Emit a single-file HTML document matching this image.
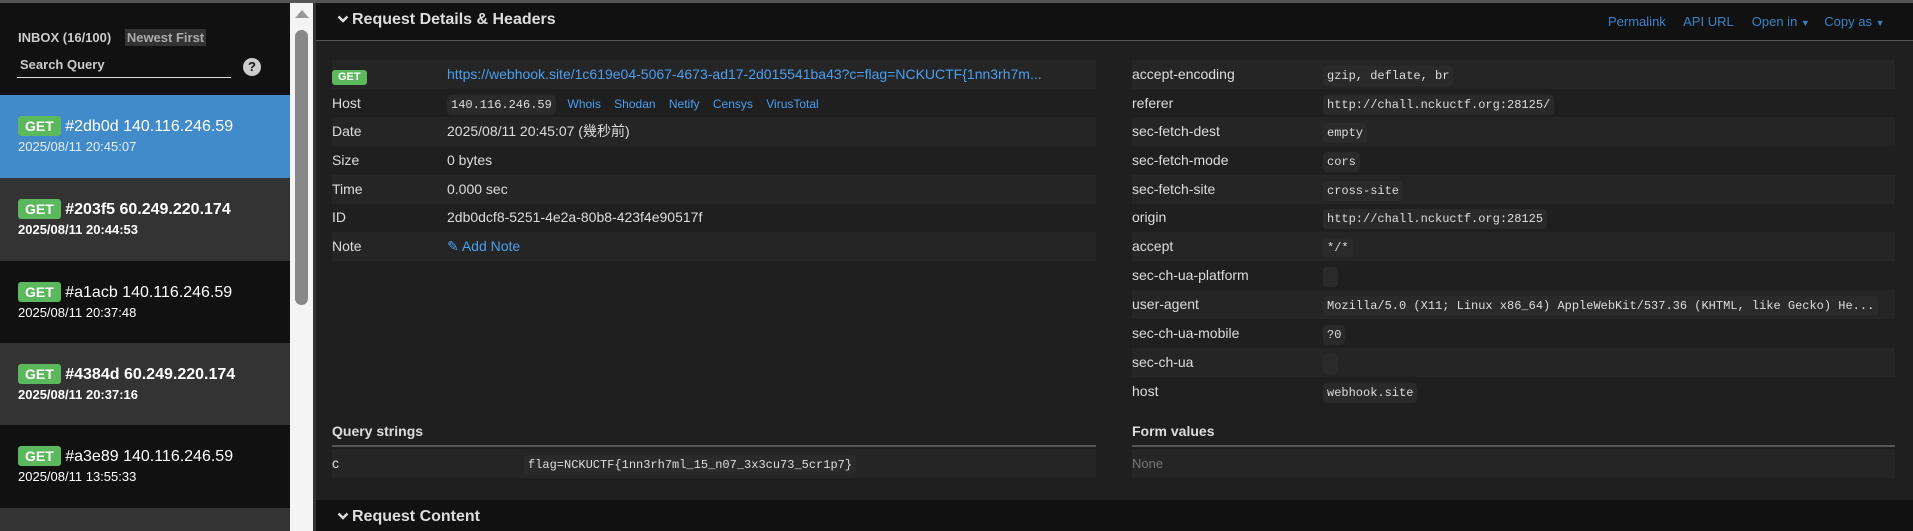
<!DOCTYPE html>
<html><head><meta charset="utf-8"><style>
*{margin:0;padding:0;box-sizing:border-box}
html,body{width:1913px;height:531px;overflow:hidden}
body{background:#1e1e1e;font-family:"Liberation Sans","Noto Sans CJK TC",sans-serif;color:#ddd;position:relative}
.abs{position:absolute}
.top{left:0;top:0;width:1913px;height:3px;background:#555}
.side{left:0;top:3px;width:290px;height:528px;background:#111}
.sb{left:290px;top:3px;width:23px;height:528px;background:#f4f4f4}
.thumb{left:295px;top:30px;width:13px;height:275px;background:#888;border-radius:7px}
.item{position:absolute;left:0;width:290px;height:83px}
.get{display:inline-block;background:#5cb85c;color:#fff;font-weight:bold;font-size:14px;padding:1px 7px;border-radius:3px;line-height:18px}
.it1{position:absolute;left:18px;top:21px;font-size:16px;color:#fff;white-space:nowrap}
.it2{position:absolute;left:18px;top:44px;font-size:13px;color:#fff}
.main{left:313px;top:3px;width:1600px;height:528px;background:#1f1f1f;border-left:3px solid #333}
.hdr{left:316px;top:3px;width:1597px;height:38px;background:#111;border-bottom:1px solid #555}
.row{position:absolute;height:29px;font-size:14px;line-height:29px;white-space:nowrap;overflow:hidden}
.row .l{position:absolute;left:0}
.mono{font-family:"Liberation Mono",monospace;font-size:12px;background:#2a2a2a;border-radius:4px;padding:3px 4px}
a{color:#4a9ff0;text-decoration:none}
.lk{color:#3a82c8;font-size:13px;white-space:nowrap}
</style></head><body>
<div class="abs top"></div>
<div class="abs side">
 <div class="abs" style="left:18px;top:27px;font-size:13px;color:#ccc;font-weight:bold">INBOX (16/100) <span style="background:#333;color:#aaa;padding:1px 2px;margin-left:10px">Newest First</span></div>
 <div class="abs" style="left:17px;top:54px;width:214px;height:21px;border-bottom:1px solid #ddd;font-size:13px;color:#ccc;font-weight:bold;padding-left:3px">Search Query</div>
 <div class="abs" style="left:243px;top:55px;width:18px;height:18px;border-radius:50%;background:#ccc;color:#111;font-size:13px;font-weight:bold;text-align:center;line-height:18px">?</div>
</div>
<div class="item" style="top:95px;background:#428bca"><div class="it1"><span class="get">GET</span> #2db0d 140.116.246.59</div><div class="it2" style="color:#e8eef5">2025/08/11 20:45:07</div></div>
<div class="item" style="top:178px;background:#333"><div class="it1" style="font-weight:bold"><span class="get">GET</span> #203f5 60.249.220.174</div><div class="it2" style="font-weight:bold">2025/08/11 20:44:53</div></div>
<div class="item" style="top:261px;background:#111"><div class="it1"><span class="get">GET</span> #a1acb 140.116.246.59</div><div class="it2">2025/08/11 20:37:48</div></div>
<div class="item" style="top:343px;background:#333"><div class="it1" style="font-weight:bold"><span class="get">GET</span> #4384d 60.249.220.174</div><div class="it2" style="font-weight:bold">2025/08/11 20:37:16</div></div>
<div class="item" style="top:425px;background:#111"><div class="it1"><span class="get">GET</span> #a3e89 140.116.246.59</div><div class="it2">2025/08/11 13:55:33</div></div>
<div class="item" style="top:508px;height:23px;background:#333"></div>
<div class="abs sb"></div>
<div class="abs" style="left:295px;top:10px;width:0;height:0;border-left:7px solid transparent;border-right:7px solid transparent;border-bottom:8px solid #999"></div>
<div class="abs thumb"></div>
<div class="abs main"></div>
<div class="abs hdr"></div>
<div class="abs" style="left:337px;top:11px;font-size:16px;font-weight:bold;color:#ddd"><svg width="12" height="10" viewBox="0 0 12 10" style="margin-right:3px"><path d="M1.5 2.5 L6 7 L10.5 2.5" stroke="#ddd" stroke-width="2.5" fill="none"/></svg>Request Details &amp; Headers</div>
<div class="abs lk" style="left:1608px;top:14px">Permalink&nbsp;&nbsp;&nbsp;&nbsp; API URL&nbsp;&nbsp;&nbsp;&nbsp; Open in <span style="font-size:9px">▼</span>&nbsp;&nbsp;&nbsp; Copy as <span style="font-size:9px">▼</span></div>

<div class="row" style="left:332px;top:60px;width:764px;background:#252525"><span class="l" style="top:1px"><span class="get" style="font-size:11px;line-height:15px;padding:0 6px">GET</span></span><a style="position:absolute;left:115px">https://webhook.site/1c619e04-5067-4673-ad17-2d015541ba43?c=flag=NCKUCTF{1nn3rh7m...</a></div>
<div class="row" style="left:332px;top:89px;width:764px"><span class="l">Host</span><span style="position:absolute;left:115px"><span class="mono">140.116.246.59</span>&nbsp;&nbsp;&nbsp;<a style="font-size:12px">Whois&nbsp;&nbsp;&nbsp; Shodan&nbsp;&nbsp;&nbsp; Netify&nbsp;&nbsp;&nbsp; Censys&nbsp;&nbsp;&nbsp; VirusTotal</a></span></div>
<div class="row" style="left:332px;top:117px;width:764px;background:#252525"><span class="l">Date</span><span style="position:absolute;left:115px">2025/08/11 20:45:07 (幾秒前)</span></div>
<div class="row" style="left:332px;top:146px;width:764px"><span class="l">Size</span><span style="position:absolute;left:115px">0 bytes</span></div>
<div class="row" style="left:332px;top:175px;width:764px;background:#252525"><span class="l">Time</span><span style="position:absolute;left:115px">0.000 sec</span></div>
<div class="row" style="left:332px;top:203px;width:764px"><span class="l">ID</span><span style="position:absolute;left:115px">2db0dcf8-5251-4e2a-80b8-423f4e90517f</span></div>
<div class="row" style="left:332px;top:232px;width:764px;background:#252525"><span class="l">Note</span><a style="position:absolute;left:115px">✎ Add Note</a></div>

<div class="row" style="left:1132px;top:60px;width:763px;background:#252525"><span class="l">accept-encoding</span><span style="position:absolute;left:191px"><span class="mono">gzip, deflate, br</span></span></div>
<div class="row" style="left:1132px;top:89px;width:763px"><span class="l">referer</span><span style="position:absolute;left:191px"><span class="mono">http://chall.nckuctf.org:28125/</span></span></div>
<div class="row" style="left:1132px;top:117px;width:763px;background:#252525"><span class="l">sec-fetch-dest</span><span style="position:absolute;left:191px"><span class="mono">empty</span></span></div>
<div class="row" style="left:1132px;top:146px;width:763px"><span class="l">sec-fetch-mode</span><span style="position:absolute;left:191px"><span class="mono">cors</span></span></div>
<div class="row" style="left:1132px;top:175px;width:763px;background:#252525"><span class="l">sec-fetch-site</span><span style="position:absolute;left:191px"><span class="mono">cross-site</span></span></div>
<div class="row" style="left:1132px;top:203px;width:763px"><span class="l">origin</span><span style="position:absolute;left:191px"><span class="mono">http://chall.nckuctf.org:28125</span></span></div>
<div class="row" style="left:1132px;top:232px;width:763px;background:#252525"><span class="l">accept</span><span style="position:absolute;left:191px"><span class="mono">*/*</span></span></div>
<div class="row" style="left:1132px;top:261px;width:763px"><span class="l">sec-ch-ua-platform</span><span style="position:absolute;left:191px"><span class="mono">&nbsp;</span></span></div>
<div class="row" style="left:1132px;top:290px;width:763px;background:#252525"><span class="l">user-agent</span><span style="position:absolute;left:191px"><span class="mono">Mozilla/5.0 (X11; Linux x86_64) AppleWebKit/537.36 (KHTML, like Gecko) He...</span></span></div>
<div class="row" style="left:1132px;top:319px;width:763px"><span class="l">sec-ch-ua-mobile</span><span style="position:absolute;left:191px"><span class="mono">?0</span></span></div>
<div class="row" style="left:1132px;top:348px;width:763px;background:#252525"><span class="l">sec-ch-ua</span><span style="position:absolute;left:191px"><span class="mono">&nbsp;</span></span></div>
<div class="row" style="left:1132px;top:377px;width:763px"><span class="l">host</span><span style="position:absolute;left:191px"><span class="mono">webhook.site</span></span></div>

<div class="abs" style="left:332px;top:423px;font-size:14px;font-weight:bold">Query strings</div>
<div class="abs" style="left:332px;top:445px;width:764px;height:2px;background:#555"></div>
<div class="row" style="left:332px;top:449px;width:764px;background:#252525"><span class="l">c</span><span style="position:absolute;left:192px"><span class="mono">flag=NCKUCTF{1nn3rh7ml_15_n07_3x3cu73_5cr1p7}</span></span></div>
<div class="abs" style="left:1132px;top:423px;font-size:14px;font-weight:bold">Form values</div>
<div class="abs" style="left:1132px;top:445px;width:763px;height:2px;background:#555"></div>
<div class="row" style="left:1132px;top:449px;width:763px;background:#252525;color:#777;font-size:13px"><span class="l">None</span></div>

<div class="abs" style="left:316px;top:500px;width:1597px;height:31px;background:#111"></div>
<div class="abs" style="left:337px;top:508px;font-size:16px;font-weight:bold"><svg width="12" height="10" viewBox="0 0 12 10" style="margin-right:3px"><path d="M1.5 2.5 L6 7 L10.5 2.5" stroke="#ddd" stroke-width="2.5" fill="none"/></svg>Request Content</div>
</body></html>
